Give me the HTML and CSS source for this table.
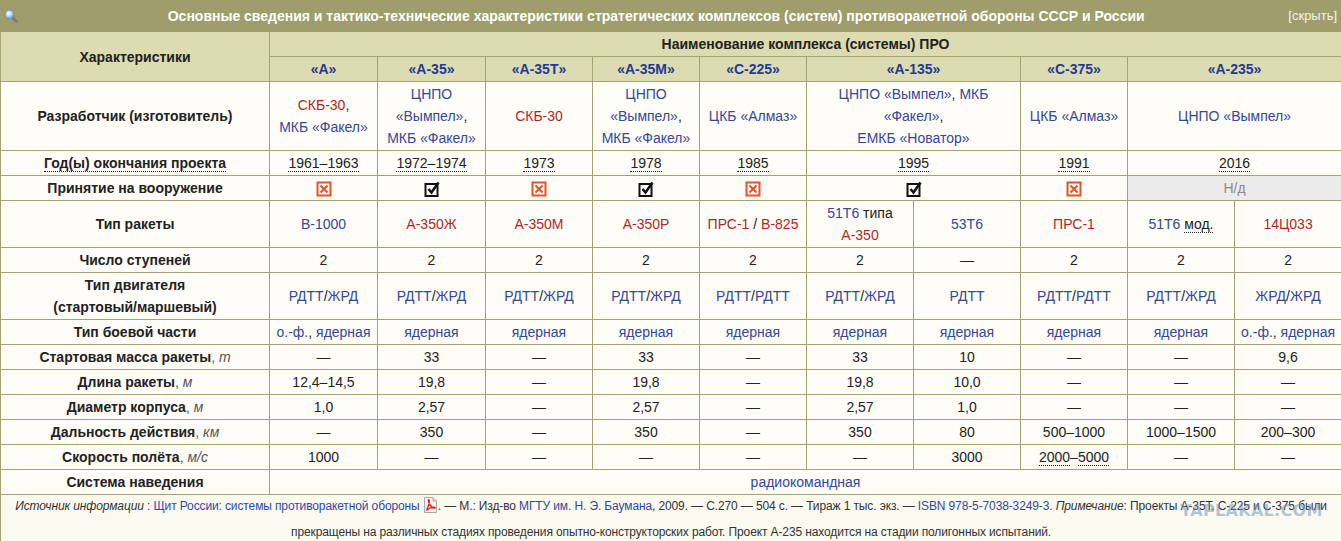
FILE: index.html
```html
<!DOCTYPE html>
<html lang="ru">
<head>
<meta charset="utf-8">
<title>ПРО СССР и России</title>
<link rel="stylesheet" href="styles.css">
</head>
<body>
<table class="wt">
  <colgroup>
    <col class="c-label">
    <col class="c-wide"><col class="c-wide">
    <col class="c-std"><col class="c-std"><col class="c-std"><col class="c-std">
    <col class="c-std"><col class="c-std"><col class="c-std"><col class="c-std">
  </colgroup>
  <tr>
    <th colspan="11" class="title">
      <div class="title-bar">
        <span class="zoom-ico"><svg width="14" height="14" viewBox="0 0 14 14"><defs><radialGradient id="lens" cx="0.4" cy="0.35" r="0.7"><stop offset="0" stop-color="#ffffff"/><stop offset="0.5" stop-color="#bcd8f0"/><stop offset="1" stop-color="#5b8fc4"/></radialGradient></defs><path d="M8.5 8.5 L12.5 12.5" stroke="#7a7a7a" stroke-width="2.6" stroke-linecap="round"/><circle cx="5.5" cy="5.5" r="4.3" fill="url(#lens)" stroke="#6f94bb" stroke-width="0.9"/></svg></span>
        <span class="title-text">Основные сведения и тактико-технические характеристики стратегических комплексов (систем) противоракетной обороны СССР и России</span>
        <span class="hide">[скрыть]</span>
      </div>
    </th>
  </tr>
  <tr>
    <th rowspan="2" class="hd">Характеристики</th>
    <th colspan="10" class="hd">Наименование комплекса (системы) ПРО</th>
  </tr>
  <tr>
    <th class="hd"><a class="hl">«А»</a></th>
    <th class="hd"><a class="hl">«А-35»</a></th>
    <th class="hd"><a class="hl">«А-35Т»</a></th>
    <th class="hd"><a class="hl">«А-35М»</a></th>
    <th class="hd"><a class="hl">«С-225»</a></th>
    <th class="hd" colspan="2"><a class="hl">«А-135»</a></th>
    <th class="hd"><a class="hl">«С-375»</a></th>
    <th class="hd" colspan="2"><a class="hl">«А-235»</a></th>
  </tr>
  <tr>
    <td class="lbl">Разработчик (изготовитель)</td>
    <td><a class="rl">СКБ-30</a>,<br><a class="bl">МКБ «Факел»</a></td>
    <td><a class="bl">ЦНПО<br>«Вымпел»</a>,<br><a class="bl">МКБ «Факел»</a></td>
    <td><a class="rl">СКБ-30</a></td>
    <td><a class="bl">ЦНПО<br>«Вымпел»</a>,<br><a class="bl">МКБ «Факел»</a></td>
    <td><a class="bl">ЦКБ «Алмаз»</a></td>
    <td colspan="2"><a class="bl">ЦНПО «Вымпел»</a>, <a class="bl">МКБ<br>«Факел»</a>,<br><a class="bl">ЕМКБ «Новатор»</a></td>
    <td><a class="bl">ЦКБ «Алмаз»</a></td>
    <td colspan="2"><a class="bl">ЦНПО «Вымпел»</a></td>
  </tr>
  <tr>
    <td class="lbl"><span class="ab">Год(ы) окончания проекта</span></td>
    <td><span class="ab">1961–1963</span></td>
    <td><span class="ab">1972–1974</span></td>
    <td><span class="ab">1973</span></td>
    <td><span class="ab">1978</span></td>
    <td><span class="ab">1985</span></td>
    <td colspan="2"><span class="ab">1995</span></td>
    <td><span class="ab">1991</span></td>
    <td colspan="2"><span class="ab">2016</span></td>
  </tr>
  <tr>
    <td class="lbl">Принятие на вооружение</td>
    <td><span class="ico"><svg width="16" height="16" viewBox="0 0 16 16"><rect x="1.5" y="1.5" width="13" height="13" fill="#fff4ee" stroke="#e0562a" stroke-width="2"/><path d="M4.5 4.5 L11.5 11.5 M11.5 4.5 L4.5 11.5" stroke="#e0562a" stroke-width="2"/></svg></span></td>
    <td><span class="ico"><svg width="16" height="16" viewBox="0 0 16 16"><rect x="1.5" y="3" width="12" height="12" fill="#fff" stroke="#111" stroke-width="2"/><path d="M4.5 8 L7.5 11.5 L14.5 1.5" stroke="#111" stroke-width="2.6" fill="none"/></svg></span></td>
    <td><span class="ico"><svg width="16" height="16" viewBox="0 0 16 16"><rect x="1.5" y="1.5" width="13" height="13" fill="#fff4ee" stroke="#e0562a" stroke-width="2"/><path d="M4.5 4.5 L11.5 11.5 M11.5 4.5 L4.5 11.5" stroke="#e0562a" stroke-width="2"/></svg></span></td>
    <td><span class="ico"><svg width="16" height="16" viewBox="0 0 16 16"><rect x="1.5" y="3" width="12" height="12" fill="#fff" stroke="#111" stroke-width="2"/><path d="M4.5 8 L7.5 11.5 L14.5 1.5" stroke="#111" stroke-width="2.6" fill="none"/></svg></span></td>
    <td><span class="ico"><svg width="16" height="16" viewBox="0 0 16 16"><rect x="1.5" y="1.5" width="13" height="13" fill="#fff4ee" stroke="#e0562a" stroke-width="2"/><path d="M4.5 4.5 L11.5 11.5 M11.5 4.5 L4.5 11.5" stroke="#e0562a" stroke-width="2"/></svg></span></td>
    <td colspan="2"><span class="ico"><svg width="16" height="16" viewBox="0 0 16 16"><rect x="1.5" y="3" width="12" height="12" fill="#fff" stroke="#111" stroke-width="2"/><path d="M4.5 8 L7.5 11.5 L14.5 1.5" stroke="#111" stroke-width="2.6" fill="none"/></svg></span></td>
    <td><span class="ico"><svg width="16" height="16" viewBox="0 0 16 16"><rect x="1.5" y="1.5" width="13" height="13" fill="#fff4ee" stroke="#e0562a" stroke-width="2"/><path d="M4.5 4.5 L11.5 11.5 M11.5 4.5 L4.5 11.5" stroke="#e0562a" stroke-width="2"/></svg></span></td>
    <td colspan="2" class="na">Н/д</td>
  </tr>
  <tr>
    <td class="lbl">Тип ракеты</td>
    <td><a class="bl">В-1000</a></td>
    <td><a class="rl">А-350Ж</a></td>
    <td><a class="rl">А-350М</a></td>
    <td><a class="rl">А-350Р</a></td>
    <td><a class="rl">ПРС-1</a> / <a class="rl">В-825</a></td>
    <td><a class="bl">51Т6</a> типа<br><a class="rl">А-350</a></td>
    <td><a class="bl">53Т6</a></td>
    <td><a class="rl">ПРС-1</a></td>
    <td><a class="bl">51Т6</a> <span class="ab">мод.</span></td>
    <td><a class="rl">14Ц033</a></td>
  </tr>
  <tr>
    <td class="lbl">Число ступеней</td>
    <td>2</td><td>2</td><td>2</td><td>2</td><td>2</td><td>2</td><td>—</td><td>2</td><td>2</td><td>2</td>
  </tr>
  <tr>
    <td class="lbl">Тип двигателя<br>(стартовый/маршевый)</td>
    <td><a class="bl">РДТТ</a>/<a class="bl">ЖРД</a></td>
    <td><a class="bl">РДТТ</a>/<a class="bl">ЖРД</a></td>
    <td><a class="bl">РДТТ</a>/<a class="bl">ЖРД</a></td>
    <td><a class="bl">РДТТ</a>/<a class="bl">ЖРД</a></td>
    <td><a class="bl">РДТТ</a>/<a class="bl">РДТТ</a></td>
    <td><a class="bl">РДТТ</a>/<a class="bl">ЖРД</a></td>
    <td><a class="bl">РДТТ</a></td>
    <td><a class="bl">РДТТ</a>/<a class="bl">РДТТ</a></td>
    <td><a class="bl">РДТТ</a>/<a class="bl">ЖРД</a></td>
    <td><a class="bl">ЖРД</a>/<a class="bl">ЖРД</a></td>
  </tr>
  <tr>
    <td class="lbl">Тип боевой части</td>
    <td><a class="bl">о.-ф.</a>, <a class="bl">ядерная</a></td>
    <td><a class="bl">ядерная</a></td>
    <td><a class="bl">ядерная</a></td>
    <td><a class="bl">ядерная</a></td>
    <td><a class="bl">ядерная</a></td>
    <td><a class="bl">ядерная</a></td>
    <td><a class="bl">ядерная</a></td>
    <td><a class="bl">ядерная</a></td>
    <td><a class="bl">ядерная</a></td>
    <td><a class="bl">о.-ф.</a>, <a class="bl">ядерная</a></td>
  </tr>
  <tr>
    <td class="lbl">Стартовая масса ракеты<span class="unit">, <i>т</i></span></td>
    <td>—</td><td>33</td><td>—</td><td>33</td><td>—</td><td>33</td><td>10</td><td>—</td><td>—</td><td>9,6</td>
  </tr>
  <tr>
    <td class="lbl">Длина ракеты<span class="unit">, <i>м</i></span></td>
    <td>12,4–14,5</td><td>19,8</td><td>—</td><td>19,8</td><td>—</td><td>19,8</td><td>10,0</td><td>—</td><td>—</td><td>—</td>
  </tr>
  <tr>
    <td class="lbl">Диаметр корпуса<span class="unit">, <i>м</i></span></td>
    <td>1,0</td><td>2,57</td><td>—</td><td>2,57</td><td>—</td><td>2,57</td><td>1,0</td><td>—</td><td>—</td><td>—</td>
  </tr>
  <tr>
    <td class="lbl">Дальность действия<span class="unit">, <i>км</i></span></td>
    <td>—</td><td>350</td><td>—</td><td>350</td><td>—</td><td>350</td><td>80</td><td>500–1000</td><td>1000–1500</td><td>200–300</td>
  </tr>
  <tr>
    <td class="lbl">Скорость полёта<span class="unit">, <i>м/с</i></span></td>
    <td>1000</td><td>—</td><td>—</td><td>—</td><td>—</td><td>—</td><td>3000</td><td><span class="ab">2000</span>–<span class="ab">5000</span></td><td>—</td><td>—</td>
  </tr>
  <tr>
    <td class="lbl">Система наведения</td>
    <td colspan="10"><a class="bl">радиокомандная</a></td>
  </tr>
  <tr>
    <td colspan="11" class="foot"><span class="ln"><i>Источник информации</i> : <a class="bl">Щит России: системы противоракетной обороны</a> <span class="pdf"><svg width="15" height="16" viewBox="0 0 15 16"><path d="M1.5 0.5 H10 L13.5 4 V15.5 H1.5 Z" fill="#f4f4f4" stroke="#a8a8a8"/><path d="M10 0.5 V4 H13.5" fill="#dcdcdc" stroke="#a8a8a8"/><path d="M3.5 13.5 C5 10 6.5 6 6.3 3.5 C6 2 5 3 5.6 5 C6.5 8 8.5 10.5 11.5 11 C12.5 11.2 12.2 10 10.5 10.2 C8 10.5 5.5 11.5 3.5 13.5 Z" fill="none" stroke="#d0211c" stroke-width="1.3"/></svg></span>. — М.: Изд-во <a class="bl">МГТУ им. Н. Э. Баумана</a>, 2009. — С.270 — 504 с. — Тираж 1 тыс. экз. — <a class="bl">ISBN 978-5-7038-3249-3</a>. <i>Примечание</i>: Проекты А-35Т, С-225 и С-375 были</span> <span class="ln">прекращены на различных стадиях проведения опытно-конструкторских работ. Проект А-235 находится на стадии полигонных испытаний.</span></td>
  </tr>
</table>
<div class="watermark">YAPLAKAL.COM</div>
</body>
</html>
```

FILE: styles.css
```css
html, body {
  margin: 0;
  padding: 0;
  background: #ffffff;
}

body {
  font-family: "Liberation Sans", Arial, sans-serif;
  font-size: 14px;
  color: #222222;
  position: relative;
}

.wt {
  width: 1341px;
  border-collapse: collapse;
  table-layout: fixed;
}

.c-label { width: 269px; }
.c-wide { width: 108px; }
.c-std { width: 107px; }

.wt td,
.wt th {
  border: 1px solid #a5a371;
  padding: 1px 3px;
  line-height: 22px;
  text-align: center;
  vertical-align: middle;
  background: #fefdf8;
}

.wt th.title {
  background: #9f9d6c;
  color: #ffffff;
  padding: 4px 4px 4px 3px;
  border-color: #9f9d6c;
}

.title-bar {
  display: flex;
  align-items: center;
}

.zoom-ico {
  width: 20px;
  display: flex;
  align-items: center;
}

.title-text {
  flex: 1;
  text-align: center;
  font-weight: bold;
  font-size: 14px;
}

.hide {
  font-weight: normal;
  font-size: 13px;
  color: #f4f4ea;
}

.wt th.hd {
  background: #dcdbb1;
  font-weight: bold;
  color: #222222;
}

.hl {
  color: #233b92;
  text-decoration: none;
}

.bl {
  color: #34489a;
  text-decoration: none;
}

.rl {
  color: #b41f27;
  text-decoration: none;
}

.wt td.lbl {
  font-weight: bold;
  color: #222222;
}

.unit {
  font-weight: normal;
  color: #555555;
}

.ab {
  border-bottom: 1px dotted #222222;
}

.ico {
  display: inline-flex;
  vertical-align: middle;
}

.wt td.na {
  background: #ebebeb;
  color: #8a8a8a;
}

.wt td.foot {
  background: #fbfaf1;
  font-size: 12px;
  line-height: 23px;
  padding: 0 2px;
  color: #333333;
}

.ln {
  display: block;
  white-space: nowrap;
  letter-spacing: -0.12px;
}

.pdf {
  display: inline-block;
  vertical-align: -3px;
}

.watermark {
  position: absolute;
  left: 1180px;
  top: 501px;
  font-family: "DejaVu Sans", sans-serif;
  font-weight: bold;
  font-size: 16px;
  letter-spacing: 0.3px;
  color: rgba(120, 150, 185, 0.55);
  pointer-events: none;
}
```
